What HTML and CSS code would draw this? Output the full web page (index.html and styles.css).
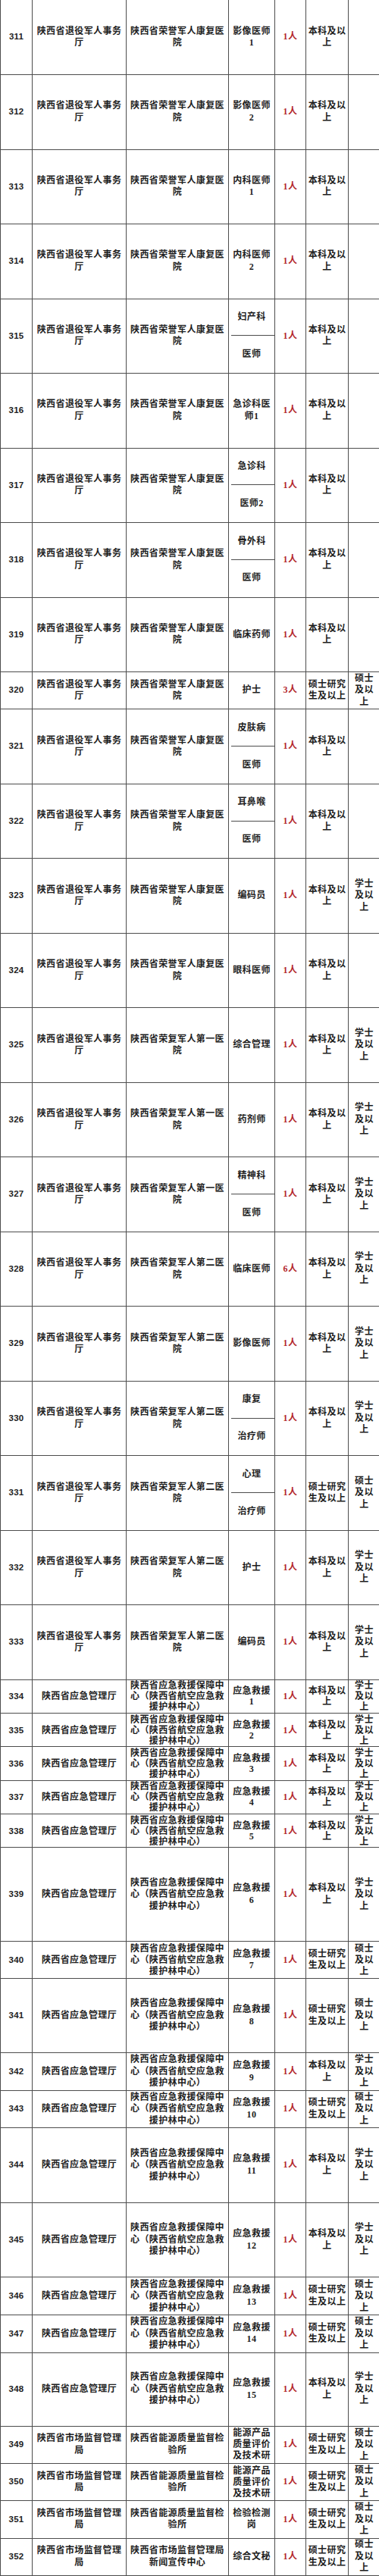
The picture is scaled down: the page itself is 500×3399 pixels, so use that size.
FILE: index.html
```html
<!DOCTYPE html>
<html lang="zh-CN">
<head>
<meta charset="utf-8">
<title>岗位表</title>
<link rel="stylesheet" href="styles.css">
</head>
<body>
<div class="frame">
<table class="grid">
<colgroup>
<col class="c1"><col class="c2"><col class="c3"><col class="c4"><col class="c5"><col class="c6"><col class="c7">
</colgroup>
<tbody>
<tr class="h2"><td class="no">311</td><td>陕西省退役军人事务厅</td><td>陕西省荣誉军人康复医院</td><td class="pos">影像医师1</td><td class="cnt">1人</td><td>本科及以上</td><td class="deg"></td></tr>
<tr class="h2"><td class="no">312</td><td>陕西省退役军人事务厅</td><td>陕西省荣誉军人康复医院</td><td class="pos">影像医师2</td><td class="cnt">1人</td><td>本科及以上</td><td class="deg"></td></tr>
<tr class="h2"><td class="no">313</td><td>陕西省退役军人事务厅</td><td>陕西省荣誉军人康复医院</td><td class="pos">内科医师1</td><td class="cnt">1人</td><td>本科及以上</td><td class="deg"></td></tr>
<tr class="h2"><td class="no">314</td><td>陕西省退役军人事务厅</td><td>陕西省荣誉军人康复医院</td><td class="pos">内科医师2</td><td class="cnt">1人</td><td>本科及以上</td><td class="deg"></td></tr>
<tr class="hh"><td class="no" rowspan="2">315</td><td rowspan="2">陕西省退役军人事务厅</td><td rowspan="2">陕西省荣誉军人康复医院</td><td class="pos sub-top">妇产科</td><td class="cnt" rowspan="2">1人</td><td rowspan="2">本科及以上</td><td class="deg" rowspan="2"></td></tr>
<tr class="hh"><td class="pos sub-bot">医师</td></tr>
<tr class="h2"><td class="no">316</td><td>陕西省退役军人事务厅</td><td>陕西省荣誉军人康复医院</td><td class="pos">急诊科医师1</td><td class="cnt">1人</td><td>本科及以上</td><td class="deg"></td></tr>
<tr class="hh"><td class="no" rowspan="2">317</td><td rowspan="2">陕西省退役军人事务厅</td><td rowspan="2">陕西省荣誉军人康复医院</td><td class="pos sub-top">急诊科</td><td class="cnt" rowspan="2">1人</td><td rowspan="2">本科及以上</td><td class="deg" rowspan="2"></td></tr>
<tr class="hh"><td class="pos sub-bot">医师2</td></tr>
<tr class="hh"><td class="no" rowspan="2">318</td><td rowspan="2">陕西省退役军人事务厅</td><td rowspan="2">陕西省荣誉军人康复医院</td><td class="pos sub-top">骨外科</td><td class="cnt" rowspan="2">1人</td><td rowspan="2">本科及以上</td><td class="deg" rowspan="2"></td></tr>
<tr class="hh"><td class="pos sub-bot">医师</td></tr>
<tr class="h2"><td class="no">319</td><td>陕西省退役军人事务厅</td><td>陕西省荣誉军人康复医院</td><td class="pos">临床药师</td><td class="cnt">1人</td><td>本科及以上</td><td class="deg"></td></tr>
<tr class="h1"><td class="no">320</td><td>陕西省退役军人事务厅</td><td>陕西省荣誉军人康复医院</td><td class="pos">护士</td><td class="cnt">3人</td><td>硕士研究生及以上</td><td class="deg">硕士及以上</td></tr>
<tr class="hh"><td class="no" rowspan="2">321</td><td rowspan="2">陕西省退役军人事务厅</td><td rowspan="2">陕西省荣誉军人康复医院</td><td class="pos sub-top">皮肤病</td><td class="cnt" rowspan="2">1人</td><td rowspan="2">本科及以上</td><td class="deg" rowspan="2"></td></tr>
<tr class="hh"><td class="pos sub-bot">医师</td></tr>
<tr class="hh"><td class="no" rowspan="2">322</td><td rowspan="2">陕西省退役军人事务厅</td><td rowspan="2">陕西省荣誉军人康复医院</td><td class="pos sub-top">耳鼻喉</td><td class="cnt" rowspan="2">1人</td><td rowspan="2">本科及以上</td><td class="deg" rowspan="2"></td></tr>
<tr class="hh"><td class="pos sub-bot">医师</td></tr>
<tr class="h2"><td class="no">323</td><td>陕西省退役军人事务厅</td><td>陕西省荣誉军人康复医院</td><td class="pos">编码员</td><td class="cnt">1人</td><td>本科及以上</td><td class="deg">学士及以上</td></tr>
<tr class="h2"><td class="no">324</td><td>陕西省退役军人事务厅</td><td>陕西省荣誉军人康复医院</td><td class="pos">眼科医师</td><td class="cnt">1人</td><td>本科及以上</td><td class="deg"></td></tr>
<tr class="h2"><td class="no">325</td><td>陕西省退役军人事务厅</td><td>陕西省荣复军人第一医院</td><td class="pos">综合管理</td><td class="cnt">1人</td><td>本科及以上</td><td class="deg">学士及以上</td></tr>
<tr class="h2"><td class="no">326</td><td>陕西省退役军人事务厅</td><td>陕西省荣复军人第一医院</td><td class="pos">药剂师</td><td class="cnt">1人</td><td>本科及以上</td><td class="deg">学士及以上</td></tr>
<tr class="hh"><td class="no" rowspan="2">327</td><td rowspan="2">陕西省退役军人事务厅</td><td rowspan="2">陕西省荣复军人第一医院</td><td class="pos sub-top">精神科</td><td class="cnt" rowspan="2">1人</td><td rowspan="2">本科及以上</td><td class="deg" rowspan="2">学士及以上</td></tr>
<tr class="hh"><td class="pos sub-bot">医师</td></tr>
<tr class="h2"><td class="no">328</td><td>陕西省退役军人事务厅</td><td>陕西省荣复军人第二医院</td><td class="pos">临床医师</td><td class="cnt">6人</td><td>本科及以上</td><td class="deg">学士及以上</td></tr>
<tr class="h2"><td class="no">329</td><td>陕西省退役军人事务厅</td><td>陕西省荣复军人第二医院</td><td class="pos">影像医师</td><td class="cnt">1人</td><td>本科及以上</td><td class="deg">学士及以上</td></tr>
<tr class="hh"><td class="no" rowspan="2">330</td><td rowspan="2">陕西省退役军人事务厅</td><td rowspan="2">陕西省荣复军人第二医院</td><td class="pos sub-top">康复</td><td class="cnt" rowspan="2">1人</td><td rowspan="2">本科及以上</td><td class="deg" rowspan="2">学士及以上</td></tr>
<tr class="hh"><td class="pos sub-bot">治疗师</td></tr>
<tr class="hh"><td class="no" rowspan="2">331</td><td rowspan="2">陕西省退役军人事务厅</td><td rowspan="2">陕西省荣复军人第二医院</td><td class="pos sub-top">心理</td><td class="cnt" rowspan="2">1人</td><td rowspan="2">硕士研究生及以上</td><td class="deg" rowspan="2">硕士及以上</td></tr>
<tr class="hh"><td class="pos sub-bot">治疗师</td></tr>
<tr class="h2"><td class="no">332</td><td>陕西省退役军人事务厅</td><td>陕西省荣复军人第二医院</td><td class="pos">护士</td><td class="cnt">1人</td><td>本科及以上</td><td class="deg">学士及以上</td></tr>
<tr class="h2"><td class="no">333</td><td>陕西省退役军人事务厅</td><td>陕西省荣复军人第二医院</td><td class="pos">编码员</td><td class="cnt">1人</td><td>本科及以上</td><td class="deg">学士及以上</td></tr>
<tr class="hs"><td class="no">334</td><td>陕西省应急管理厅</td><td>陕西省应急救援保障中心（陕西省航空应急救援护林中心）</td><td class="pos">应急救援1</td><td class="cnt">1人</td><td>本科及以上</td><td class="deg">学士及以上</td></tr>
<tr class="hs"><td class="no">335</td><td>陕西省应急管理厅</td><td>陕西省应急救援保障中心（陕西省航空应急救援护林中心）</td><td class="pos">应急救援2</td><td class="cnt">1人</td><td>本科及以上</td><td class="deg">学士及以上</td></tr>
<tr class="hs"><td class="no">336</td><td>陕西省应急管理厅</td><td>陕西省应急救援保障中心（陕西省航空应急救援护林中心）</td><td class="pos">应急救援3</td><td class="cnt">1人</td><td>本科及以上</td><td class="deg">学士及以上</td></tr>
<tr class="hs"><td class="no">337</td><td>陕西省应急管理厅</td><td>陕西省应急救援保障中心（陕西省航空应急救援护林中心）</td><td class="pos">应急救援4</td><td class="cnt">1人</td><td>本科及以上</td><td class="deg">学士及以上</td></tr>
<tr class="hs"><td class="no">338</td><td>陕西省应急管理厅</td><td>陕西省应急救援保障中心（陕西省航空应急救援护林中心）</td><td class="pos">应急救援5</td><td class="cnt">1人</td><td>本科及以上</td><td class="deg">学士及以上</td></tr>
<tr class="h339"><td class="no">339</td><td>陕西省应急管理厅</td><td>陕西省应急救援保障中心（陕西省航空应急救援护林中心）</td><td class="pos">应急救援6</td><td class="cnt">1人</td><td>本科及以上</td><td class="deg">学士及以上</td></tr>
<tr class="h340"><td class="no">340</td><td>陕西省应急管理厅</td><td>陕西省应急救援保障中心（陕西省航空应急救援护林中心）</td><td class="pos">应急救援7</td><td class="cnt">1人</td><td>硕士研究生及以上</td><td class="deg">硕士及以上</td></tr>
<tr class="h2"><td class="no">341</td><td>陕西省应急管理厅</td><td>陕西省应急救援保障中心（陕西省航空应急救援护林中心）</td><td class="pos">应急救援8</td><td class="cnt">1人</td><td>硕士研究生及以上</td><td class="deg">硕士及以上</td></tr>
<tr class="h1"><td class="no">342</td><td>陕西省应急管理厅</td><td>陕西省应急救援保障中心（陕西省航空应急救援护林中心）</td><td class="pos">应急救援9</td><td class="cnt">1人</td><td>本科及以上</td><td class="deg">学士及以上</td></tr>
<tr class="h1"><td class="no">343</td><td>陕西省应急管理厅</td><td>陕西省应急救援保障中心（陕西省航空应急救援护林中心）</td><td class="pos">应急救援10</td><td class="cnt">1人</td><td>硕士研究生及以上</td><td class="deg">硕士及以上</td></tr>
<tr class="h2"><td class="no">344</td><td>陕西省应急管理厅</td><td>陕西省应急救援保障中心（陕西省航空应急救援护林中心）</td><td class="pos">应急救援11</td><td class="cnt">1人</td><td>本科及以上</td><td class="deg">学士及以上</td></tr>
<tr class="h345"><td class="no">345</td><td>陕西省应急管理厅</td><td>陕西省应急救援保障中心（陕西省航空应急救援护林中心）</td><td class="pos">应急救援12</td><td class="cnt">1人</td><td>本科及以上</td><td class="deg">学士及以上</td></tr>
<tr class="h1b"><td class="no">346</td><td>陕西省应急管理厅</td><td>陕西省应急救援保障中心（陕西省航空应急救援护林中心）</td><td class="pos">应急救援13</td><td class="cnt">1人</td><td>硕士研究生及以上</td><td class="deg">硕士及以上</td></tr>
<tr class="h1b"><td class="no">347</td><td>陕西省应急管理厅</td><td>陕西省应急救援保障中心（陕西省航空应急救援护林中心）</td><td class="pos">应急救援14</td><td class="cnt">1人</td><td>硕士研究生及以上</td><td class="deg">硕士及以上</td></tr>
<tr class="h348"><td class="no">348</td><td>陕西省应急管理厅</td><td>陕西省应急救援保障中心（陕西省航空应急救援护林中心）</td><td class="pos">应急救援15</td><td class="cnt">1人</td><td>本科及以上</td><td class="deg">学士及以上</td></tr>
<tr class="h1"><td class="no">349</td><td>陕西省市场监督管理局</td><td>陕西省能源质量监督检验所</td><td class="pos clip">能源产品质量评价及技术研</td><td class="cnt">1人</td><td>硕士研究生及以上</td><td class="deg">硕士及以上</td></tr>
<tr class="h1"><td class="no">350</td><td>陕西省市场监督管理局</td><td>陕西省能源质量监督检验所</td><td class="pos clip">能源产品质量评价及技术研</td><td class="cnt">1人</td><td>硕士研究生及以上</td><td class="deg">硕士及以上</td></tr>
<tr class="h1"><td class="no">351</td><td>陕西省市场监督管理局</td><td>陕西省能源质量监督检验所</td><td class="pos">检验检测岗</td><td class="cnt">1人</td><td>硕士研究生及以上</td><td class="deg">硕士及以上</td></tr>
<tr class="h1"><td class="no">352</td><td>陕西省市场监督管理局</td><td>陕西省市场监督管理局新闻宣传中心</td><td class="pos">综合文秘</td><td class="cnt">1人</td><td>硕士研究生及以上</td><td class="deg">硕士及以上</td></tr>
</tbody>
</table>
</div>
</body>
</html>
```
FILE: styles.css
```css
html, body {
  margin: 0;
  padding: 0;
  background: #ffffff;
}

.frame {
  width: 500px;
  overflow: hidden;
}

.grid {
  width: 501px;
  table-layout: fixed;
  border-collapse: collapse;
  border-top: hidden;
}

.c1 { width: 42px; }
.c2 { width: 124px; }
.c3 { width: 135px; }
.c4 { width: 61px; }
.c5 { width: 41px; }
.c6 { width: 56px; }
.c7 { width: 42px; }

.grid td {
  border: 1px solid #4d4d4d;
  padding: 0 2px;
  text-align: center;
  vertical-align: middle;
  font-family: "Liberation Serif", "Noto Sans CJK SC", serif;
  font-weight: 700;
  font-size: 12px;
  letter-spacing: 0.4px;
  line-height: 15.5px;
  color: #1e1e1e;
  overflow: hidden;
}

.grid td.no {
  font-family: "Liberation Sans", "Noto Sans", sans-serif;
  font-weight: 700;
  font-size: 11.5px;
  letter-spacing: 0.2px;
  color: #222222;
}

.grid td.pos {
  padding: 0 4px;
}

.grid td.cnt {
  color: #b3282c;
}

.grid td.deg {
  padding: 0 5px;
}

.grid td.sub-top {
  border-bottom: hidden;
  background: linear-gradient(#4d4d4d, #4d4d4d) no-repeat right 0 bottom 0 / calc(100% - 3px) 1px;
}

.grid td.sub-bot {
  border-top: hidden;
}

.grid td.clip {
  line-height: 15px;
}

.h2 { height: 98.5px; }
.hh { height: 49.25px; }
.h1 { height: 49.3px; }
.h1b { height: 49.6px; }
.hs { height: 44.3px; }
.hs td { line-height: 14px; }
.h339 { height: 124.2px; }
.h340 { height: 48.5px; }
.h340 td { line-height: 15px; }
.h345 { height: 98.9px; }
.h348 { height: 97px; }
```
